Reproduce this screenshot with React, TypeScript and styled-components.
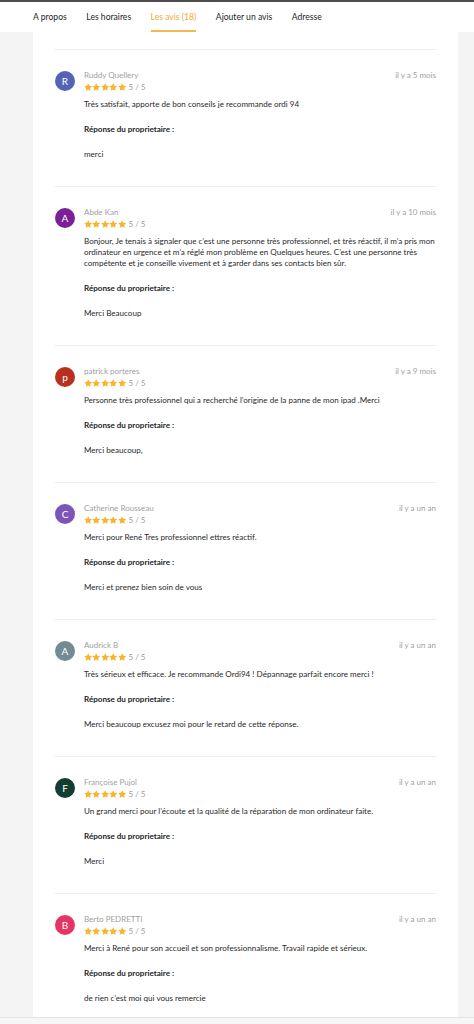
import React from "react";
import styled, { createGlobalStyle } from "styled-components";

const GlobalStyle = createGlobalStyle`
  html, body {
    margin: 0;
    padding: 0;
    background: #f4f4f4;
    font-family: Lato, "Noto Sans", sans-serif;
  }
  * { box-sizing: border-box; }
`;

const Page = styled.div`
  display: flex;
  flex-direction: column;
  min-height: 1024px;
  background: #f4f4f4;
`;

const TopBar = styled.nav`
  display: flex;
  gap: 19.5px;
  height: 32px;
  padding-left: 33px;
  background: #fff;
  border-top: 2px solid #4e4e4e;
`;

const NavItem = styled.span<{ $active?: boolean }>`
  display: flex;
  align-items: center;
  font-size: 8.6px;
  color: ${(p) => (p.$active ? "#efaa33" : "#1e1e1e")};
  border-bottom: 2px solid ${(p) => (p.$active ? "#f4b84c" : "transparent")};
  padding-top: 1px;
  white-space: nowrap;
`;

const Main = styled.main`
  display: flex;
  padding-left: 33px;
`;

const Card = styled.section`
  width: 425px;
  background: #fff;
  padding: 17px 22px 0;
`;

const Review = styled.article`
  display: grid;
  grid-template-columns: 20px 1fr;
  column-gap: 9px;
  border-top: 1px solid #ececec;
  padding: 20px 0 26px;
  &:last-child {
    padding-bottom: 13px;
  }
`;

const Avatar = styled.div<{ $bg: string }>`
  width: 20px;
  height: 20px;
  margin-top: 1px;
  border-radius: 50%;
  background: ${(p) => p.$bg};
  color: #fff;
  font-size: 10px;
  display: flex;
  align-items: center;
  justify-content: center;
`;

const Content = styled.div`
  display: flex;
  flex-direction: column;
  min-width: 0;
`;

const Head = styled.div`
  display: flex;
  justify-content: space-between;
  font-size: 8px;
  line-height: 11px;
  color: #a0a0a0;
`;

const StarsRow = styled.div`
  display: flex;
  align-items: center;
  height: 12px;
`;

const Score = styled.span`
  margin-left: 2.5px;
  font-size: 8px;
  color: #9c9c9c;
`;

const Text = styled.p<{ $gap: number; $bold?: boolean }>`
  margin: ${(p) => p.$gap}px 0 0;
  font-size: 8.05px;
  line-height: 11px;
  color: ${(p) => (p.$bold ? "#1e1e1e" : "#2a2a2a")};
  font-weight: ${(p) => (p.$bold ? 700 : 400)};
`;

const Footer = styled.footer`
  height: 12px;
  background: #f7f7f7;
  border-top: 1px solid #e4e4e4;
`;

const Star = () => (
  <svg width="8.4" height="8.4" viewBox="0 0 24 24">
    <path
      d="M12 0.5l3.5 7.3 8 1.1-5.8 5.5 1.5 7.9L12 18.4l-7.2 3.9 1.5-7.9L0.5 8.9l8-1.1z"
      fill="#f6b52c"
    />
  </svg>
);

type R = { name: string; letter: string; color: string; date: string; text: string; answer: string };

const reviews: R[] = [
  { name: "Ruddy Quellery", letter: "R", color: "#5563b5", date: "il y a 5 mois", text: "Très satisfait, apporte de bon conseils je recommande ordi 94", answer: "merci" },
  { name: "Abde Kan", letter: "A", color: "#7a2196", date: "il y a 10 mois", text: "Bonjour, Je tenais à signaler que c’est une personne très professionnel, et très réactif, il m’a pris mon ordinateur en urgence et m’a réglé mon problème en Quelques heures. C’est une personne très compétente et je conseille vivement et à garder dans ses contacts bien sûr.", answer: "Merci Beaucoup" },
  { name: "patrick porteres", letter: "p", color: "#b9301f", date: "il y a 9 mois", text: "Personne très professionnel qui a recherché l’origine de la panne de mon ipad .Merci", answer: "Merci beaucoup," },
  { name: "Catherine Rousseau", letter: "C", color: "#7d55b8", date: "il y a un an", text: "Merci pour René Tres professionnel ettres réactif.", answer: "Merci et prenez bien soin de vous" },
  { name: "Audrick B", letter: "A", color: "#738b93", date: "il y a un an", text: "Très sérieux et efficace. Je recommande Ordi94 ! Dépannage parfait encore merci !", answer: "Merci beaucoup excusez moi pour le retard de cette réponse." },
  { name: "Françoise Pujol", letter: "F", color: "#123e31", date: "il y a un an", text: "Un grand merci pour l’écoute et la qualité de la réparation de mon ordinateur faite.", answer: "Merci" },
  { name: "Berto PEDRETTI", letter: "B", color: "#e63466", date: "il y a un an", text: "Merci à René pour son accueil et son professionnalisme. Travail rapide et sérieux.", answer: "de rien c’est moi qui vous remercie" },
];

export default function App() {
  return (
    <>
      <GlobalStyle />
      <Page>
        <TopBar>
          <NavItem>A propos</NavItem>
          <NavItem>Les horaires</NavItem>
          <NavItem $active>Les avis (18)</NavItem>
          <NavItem>Ajouter un avis</NavItem>
          <NavItem>Adresse</NavItem>
        </TopBar>
        <Main>
          <Card>
            {reviews.map((r, i) => (
              <Review key={i}>
                <Avatar $bg={r.color}>{r.letter}</Avatar>
                <Content>
                  <Head>
                    <span>{r.name}</span>
                    <span>{r.date}</span>
                  </Head>
                  <StarsRow>
                    <Star />
                    <Star />
                    <Star />
                    <Star />
                    <Star />
                    <Score>5 / 5</Score>
                  </StarsRow>
                  <Text $gap={6}>{r.text}</Text>
                  <Text $gap={14} $bold>Réponse du proprietaire :</Text>
                  <Text $gap={14}>{r.answer}</Text>
                </Content>
              </Review>
            ))}
          </Card>
        </Main>
        <Footer />
      </Page>
    </>
  );
}
